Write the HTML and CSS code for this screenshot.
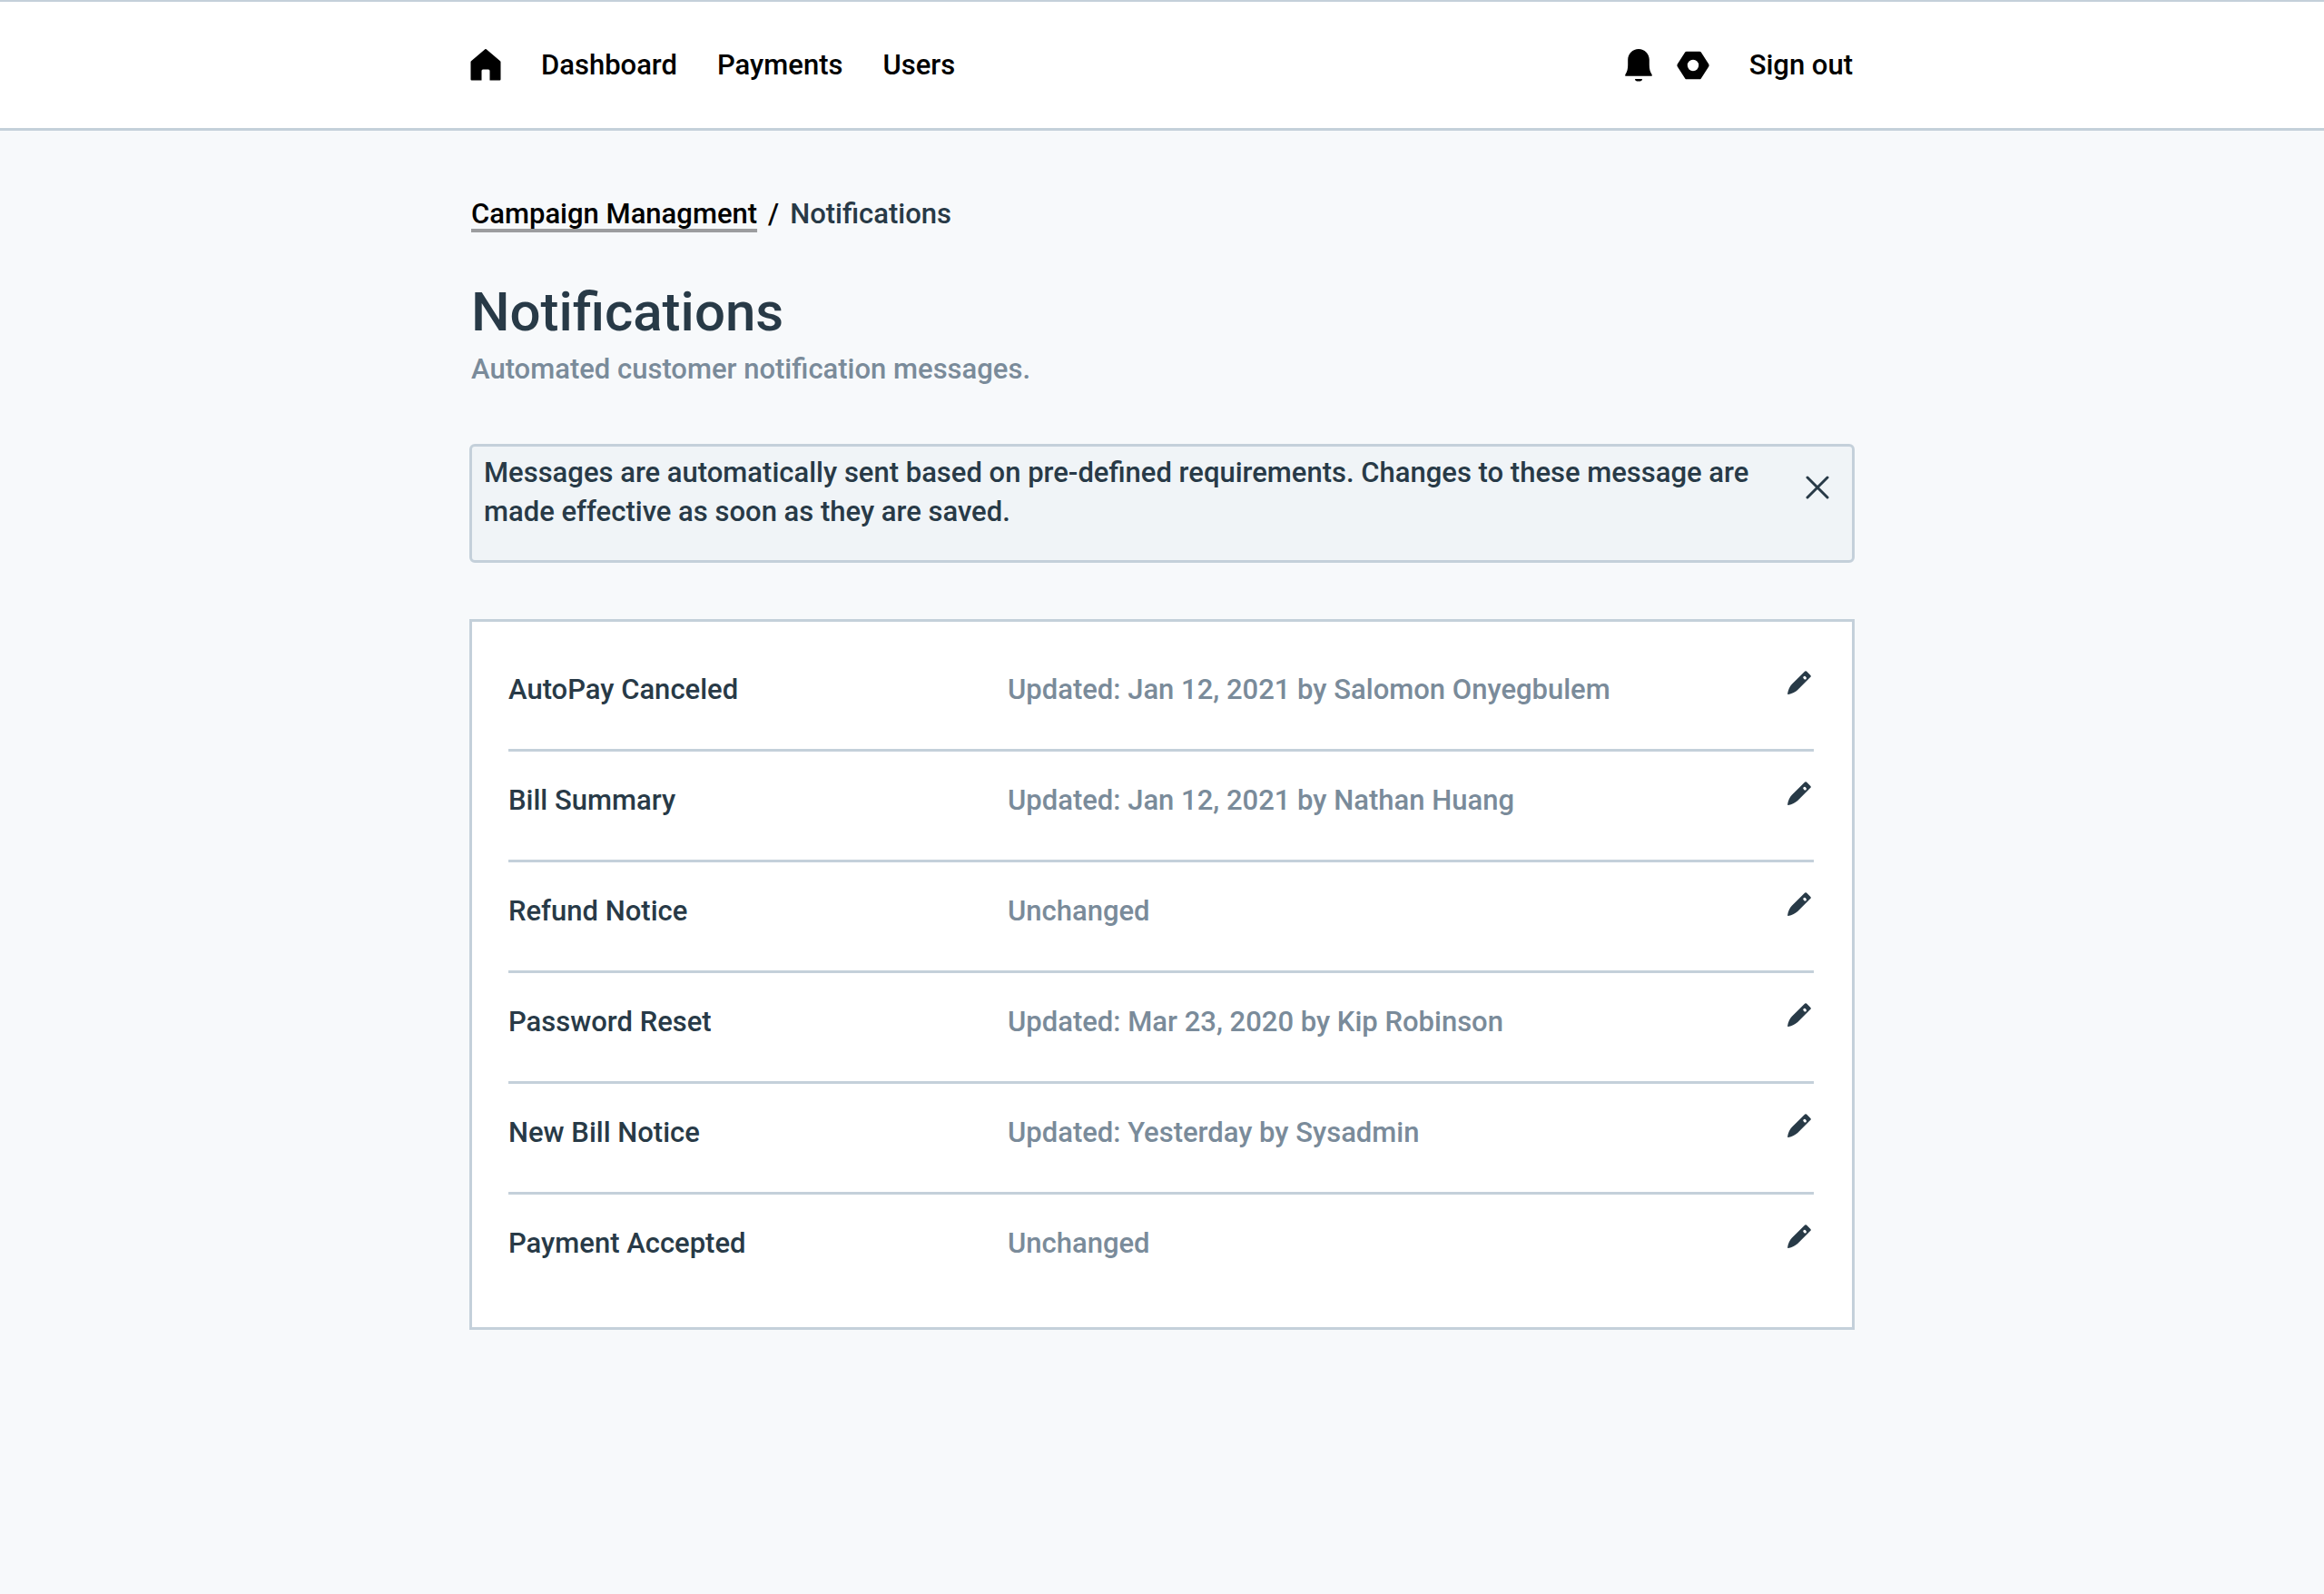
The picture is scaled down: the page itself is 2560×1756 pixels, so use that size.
FILE: index.html
```html
<!DOCTYPE html>
<html lang="en">
<head>
<meta charset="utf-8">
<meta name="viewport" content="width=device-width, initial-scale=1">
<title>Notifications</title>
<link rel="stylesheet" href="styles.css">
</head>
<body>
<svg class="sprite" aria-hidden="true">
  <symbol id="pencil" viewBox="0 0 26 26">
    <path fill-rule="evenodd" d="M19.2.6a1.3 1.3 0 0 1 1.8 0L25.4 5a1.3 1.3 0 0 1 0 1.800L11.200 21C8.800 23.200 5 25.200.900 25.900a.700.700 0 0 1-.800-.800C.700 21 2.500 17 4.800 14.800zM18.300 5.900a1.700 1.700 0 0 0-.900 2.100l1.300 1.500a1.700 1.700 0 0 0 2-.800 1.500 1.500 0 0 0-.200-1.700l-.900-1a1.300 1.300 0 0 0-1.300-.100z"/>
  </symbol>
</svg>
<header class="topbar">
  <div class="container topbar-inner">
    <nav class="nav" aria-label="Main">
      <a class="icon-link" href="#" aria-label="Home">
        <svg class="icon-home" viewBox="0 1 34 36"><path d="M16 1.400a1.500 1.500 0 0 1 2 0L33 14.200q.500.400.500 1.200V34.500q0 1-1 1H21.500V25q0-1.500-1.500-1.500H14q-1.500 0-1.500 1.500V35.500H1.500q-1 0-1-1V15.400q0-.800.500-1.200z"/></svg>
      </a>
      <a href="#">Dashboard</a>
      <a href="#">Payments</a>
      <a href="#">Users</a>
    </nav>
    <div class="account">
      <button class="icon-button" type="button" aria-label="Alerts">
        <svg class="icon-bell" viewBox="0 0 32 36"><path d="M16 0C22.600 0 27.800 5.200 27.800 11.800V17.500C27.800 22 28.500 25 30.700 28.200Q31.400 29.800 30 29.800H2Q.600 29.800 1.300 28.200C3.500 25 4.200 22 4.200 17.500V11.800C4.200 5.200 9.400 0 16 0zM12 33H20Q20 35.600 16 35.600T12 33z"/></svg>
      </button>
      <button class="icon-button" type="button" aria-label="Settings">
        <svg class="icon-nut" viewBox="0 0 36 32"><path fill-rule="evenodd" d="M9.200 1.600Q9.800.700 10.800.700H25.200Q26.200.700 26.800 1.600L35.300 14.800Q36 16 35.300 17.200L26.800 30.400Q26.200 31.300 25.200 31.300H10.800Q9.800 31.300 9.200 30.400L.700 17.200Q0 16 .700 14.800zM18 9.800a6.200 6.200 0 1 0 0 12.400 6.200 6.200 0 0 0 0-12.400z"/></svg>
      </button>
      <a class="sign-out" href="#">Sign out</a>
    </div>
  </div>
</header>
<main class="container">
  <nav class="breadcrumb" aria-label="Breadcrumb">
    <a href="#">Campaign Managment</a>
    <span class="separator">/</span>
    <span class="current" aria-current="page">Notifications</span>
  </nav>
  <h1 class="title">Notifications</h1>
  <p class="subtitle">Automated customer notification messages.</p>
  <section class="notice">
    <p class="notice-text">Messages are automatically sent based on pre-defined requirements. Changes to these message are made effective as soon as they are saved.</p>
    <button class="icon-button" type="button" aria-label="Dismiss">
      <svg class="icon-close" viewBox="0 0 26 26"><path d="M2 2L24 24M24 2L2 24"/></svg>
    </button>
  </section>
  <section class="card">
    <table class="messages">
      <tbody>
        <tr><th scope="row">AutoPay Canceled</th><td>Updated: Jan 12, 2021 by Salomon Onyegbulem</td><td class="edit"><button class="icon-button" type="button" aria-label="Edit AutoPay Canceled"><svg class="icon-pencil"><use href="#pencil"/></svg></button></td></tr>
        <tr><th scope="row">Bill Summary</th><td>Updated: Jan 12, 2021 by Nathan Huang</td><td class="edit"><button class="icon-button" type="button" aria-label="Edit Bill Summary"><svg class="icon-pencil"><use href="#pencil"/></svg></button></td></tr>
        <tr><th scope="row">Refund Notice</th><td>Unchanged</td><td class="edit"><button class="icon-button" type="button" aria-label="Edit Refund Notice"><svg class="icon-pencil"><use href="#pencil"/></svg></button></td></tr>
        <tr><th scope="row">Password Reset</th><td>Updated: Mar 23, 2020 by Kip Robinson</td><td class="edit"><button class="icon-button" type="button" aria-label="Edit Password Reset"><svg class="icon-pencil"><use href="#pencil"/></svg></button></td></tr>
        <tr><th scope="row">New Bill Notice</th><td>Updated: Yesterday by Sysadmin</td><td class="edit"><button class="icon-button" type="button" aria-label="Edit New Bill Notice"><svg class="icon-pencil"><use href="#pencil"/></svg></button></td></tr>
        <tr><th scope="row">Payment Accepted</th><td>Unchanged</td><td class="edit"><button class="icon-button" type="button" aria-label="Edit Payment Accepted"><svg class="icon-pencil"><use href="#pencil"/></svg></button></td></tr>
      </tbody>
    </table>
  </section>
</main>
</body>
</html>
```
FILE: styles.css
```css
:root {
  --ink: #283a47;
  --muted: #7a8b9a;
  --line: #c4d0da;
}

* {
  box-sizing: border-box;
}

body {
  margin: 0;
  background: #f7f9fb;
  color: var(--ink);
  font-family: Roboto, "Liberation Sans", sans-serif;
  font-size: 31px;
  font-weight: 500;
  line-height: 40px;
}

a {
  color: #000;
  text-decoration: none;
}

svg {
  display: block;
  fill: currentColor;
}

.sprite {
  display: none;
}

.container {
  max-width: 1526px;
  margin: 0 auto;
}

.icon-button {
  flex: none;
  padding: 0;
  border: 0;
  background: none;
  color: inherit;
  cursor: pointer;
}

.topbar {
  border-top: 2px solid var(--line);
  border-bottom: 3px solid var(--line);
  background: #fff;
  color: #000;
}

.topbar-inner {
  display: flex;
  align-items: center;
  justify-content: space-between;
  padding: 50px 2px 49px 1px;
}

.nav,
.account {
  display: flex;
  align-items: center;
}

.nav {
  gap: 44px;
}

.account {
  gap: 26px;
}

.sign-out {
  margin-left: 18px;
}

.icon-home {
  width: 34px;
  height: 36px;
}

.icon-bell {
  width: 32px;
  height: 36px;
}

.icon-nut {
  width: 36px;
  height: 32px;
}

.breadcrumb {
  display: flex;
  padding: 72px 2px 0;
}

.breadcrumb a {
  text-decoration: underline 4px #9c9d9f;
  text-decoration-skip-ink: none;
  text-underline-offset: 6px;
}

.separator {
  margin: 0 12px;
  color: #000;
}

.title {
  margin: 48px 0 0 2px;
  font-size: 60px;
  font-weight: 500;
  line-height: 80px;
}

.subtitle {
  margin: 3px 0 0 2px;
  color: var(--muted);
}

.notice {
  display: flex;
  align-items: flex-start;
  justify-content: space-between;
  gap: 40px;
  margin-top: 62px;
  padding: 7px 25px 32px 13px;
  border: 3px solid var(--line);
  border-radius: 6px;
  background: #f0f4f7;
}

.notice-text {
  margin: 0;
  line-height: 43px;
}

.icon-close {
  width: 26px;
  height: 26px;
  margin-top: 25px;
  fill: none;
  stroke: currentColor;
  stroke-width: 3;
  stroke-linecap: round;
}

.card {
  margin-top: 62px;
  padding: 21px 42px 24px 40px;
  border: 3px solid var(--line);
  background: #fff;
}

.messages {
  width: 100%;
  border-collapse: separate;
  border-spacing: 0;
}

.messages th,
.messages td {
  padding: 34px 0 45px;
  border-bottom: 3px solid var(--line);
  font-weight: inherit;
  text-align: left;
  vertical-align: top;
}

.messages tr:last-child > * {
  border-bottom-color: transparent;
}

.messages th {
  width: 550px;
}

.messages td {
  color: var(--muted);
}

.messages .edit {
  width: 60px;
  padding-top: 33px;
  padding-right: 3px;
  color: var(--ink);
}

.edit .icon-button {
  display: block;
  margin-left: auto;
}

.icon-pencil {
  width: 26px;
  height: 26px;
}
```
